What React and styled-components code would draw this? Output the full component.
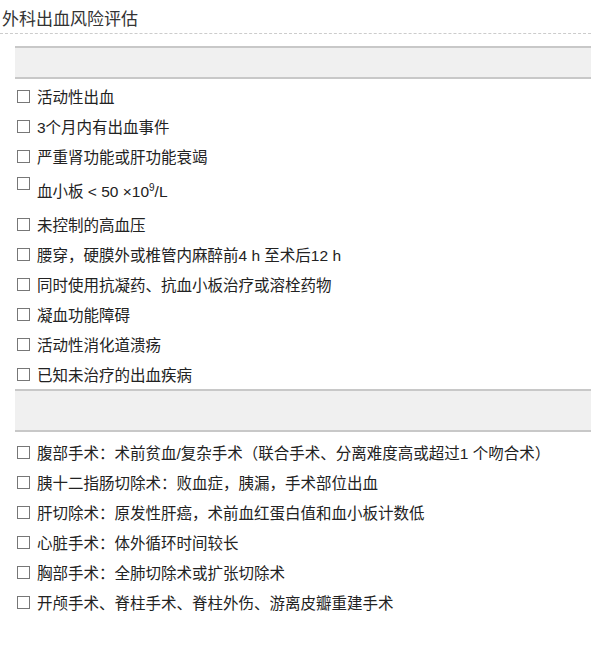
import React from "react";
import styled, { createGlobalStyle } from "styled-components";

const G = createGlobalStyle`
  body { margin: 0; background: #fff; font-family: "Liberation Sans", "Noto Sans CJK SC", sans-serif; color: #333; }
`;
const Title = styled.div`
  font-size: 17px; height: 34px; line-height: 36px; padding-left: 2px;
  border-bottom: 1px dashed #ccc; color: #333; font-family: "Noto Sans CJK SC", sans-serif;
  box-sizing: border-box;
`;
const Body = styled.div` padding: 12px 0 0 15px; `;
const Header = styled.div`
  height: ${p => p.h}px; background: #f0f0f0; box-sizing: border-box;
  border-top: 2px solid #c8c8c8; border-bottom: 2px solid #c8c8c8; margin-bottom: ${p => p.mb}px;
`;
const Row = styled.label`
  display: flex; align-items: ${p => p.tall ? "flex-end" : "center"}; height: ${p => p.tall ? 38 : 30}px;
  padding-bottom: ${p => p.tall ? 8 : 0}px; box-sizing: border-box;
  font-size: 15.5px; font-family: "Liberation Sans", "Noto Sans CJK SC", sans-serif; color: #222;
`;
const Box = styled.span`
  width: 13px; height: 13px; border: 1px solid #777; margin: 0 7px 0 2px; flex: none;
  align-self: ${p => p.tall ? "flex-start" : "auto"}; margin-top: ${p => p.tall ? "6px" : "0"};
  background: #fff; box-sizing: border-box;
`;
const Txt = styled.span` white-space: nowrap; `;
const Sup = styled.sup` font-size: 10px; vertical-align: super; line-height: 0; `;

const a = ["活动性出血","3个月内有出血事件","严重肾功能或肝功能衰竭", null,"未控制的高血压","腰穿，硬膜外或椎管内麻醉前4 h 至术后12 h","同时使用抗凝药、抗血小板治疗或溶栓药物","凝血功能障碍","活动性消化道溃疡","已知未治疗的出血疾病"];
const b = ["腹部手术：术前贫血/复杂手术（联合手术、分离难度高或超过1 个吻合术）","胰十二指肠切除术：败血症，胰漏，手术部位出血","肝切除术：原发性肝癌，术前血红蛋白值和血小板计数低","心脏手术：体外循环时间较长","胸部手术：全肺切除术或扩张切除术","开颅手术、脊柱手术、脊柱外伤、游离皮瓣重建手术"];

export default function App() {
  return (<>
    <G />
    <Title>外科出血风险评估</Title>
    <Body>
      <Header h={33} mb={2} />
      {a.map((t, i) => t === null ? (
        <Row key={i} tall><Box tall /><Txt>血小板 &lt; 50 ×10<Sup>9</Sup>/L</Txt></Row>
      ) : (<Row key={i}><Box /><Txt>{t}</Txt></Row>))}
      <Header h={43} mb={5} />
      {b.map((t, i) => <Row key={i}><Box /><Txt>{t}</Txt></Row>)}
    </Body>
  </>);
}
